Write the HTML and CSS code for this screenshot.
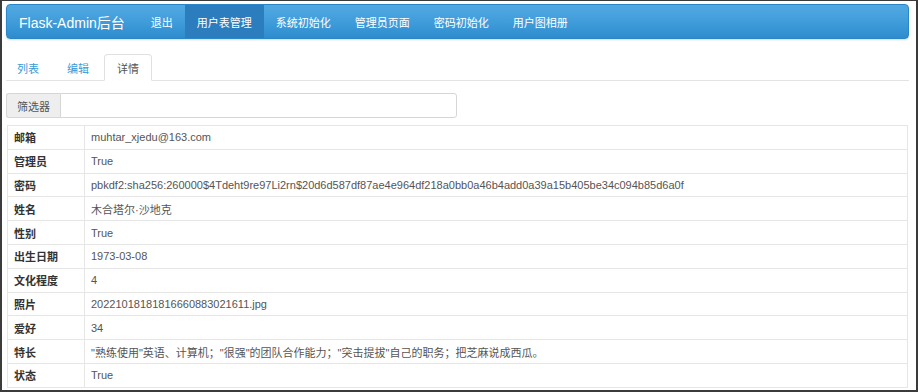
FILE: index.html
```html
<!DOCTYPE html>
<html lang="zh">
<head>
<meta charset="utf-8">
<title>Flask-Admin后台</title>
<link rel="stylesheet" href="styles.css">
</head>
<body>
<div class="frame">
  <nav class="navbar">
    <a class="brand" href="#">Flask-Admin后台</a>
    <ul class="nav">
      <li><a href="#">退出</a></li>
      <li class="active"><a href="#">用户表管理</a></li>
      <li><a href="#">系统初始化</a></li>
      <li><a href="#">管理员页面</a></li>
      <li><a href="#">密码初始化</a></li>
      <li><a href="#">用户图相册</a></li>
    </ul>
  </nav>

  <ul class="tabs">
    <li><a href="#">列表</a></li>
    <li><a href="#">编辑</a></li>
    <li class="active"><a href="#">详情</a></li>
  </ul>

  <div class="filter">
    <span class="addon">筛选器</span>
    <input class="filter-input" type="text">
  </div>

  <table class="details">
    <tbody>
      <tr><th>邮箱</th><td>muhtar_xjedu@163.com</td></tr>
      <tr><th>管理员</th><td>True</td></tr>
      <tr><th>密码</th><td>pbkdf2:sha256:260000$4Tdeht9re97Li2rn$20d6d587df87ae4e964df218a0bb0a46b4add0a39a15b405be34c094b85d6a0f</td></tr>
      <tr><th>姓名</th><td>木合塔尔·沙地克</td></tr>
      <tr><th>性别</th><td>True</td></tr>
      <tr><th>出生日期</th><td>1973-03-08</td></tr>
      <tr><th>文化程度</th><td>4</td></tr>
      <tr><th>照片</th><td>20221018181816660883021611.jpg</td></tr>
      <tr><th>爱好</th><td>34</td></tr>
      <tr><th>特长</th><td>"熟练使用"英语、计算机；"很强"的团队合作能力；"突击提拔"自己的职务；把芝麻说成西瓜。</td></tr>
      <tr><th>状态</th><td>True</td></tr>
    </tbody>
  </table>
</div>
</body>
</html>
```

FILE: styles.css
```css
html, body {
  margin: 0;
  padding: 0;
  background: #ffffff;
}

.frame {
  width: 918px;
  height: 392px;
  box-sizing: border-box;
  border-style: solid;
  border-color: #3b3b3b;
  border-width: 1px 2px 2px 2px;
  padding: 3px 7px 0 4px;
  overflow: hidden;
  font-family: "Liberation Sans", "Noto Sans CJK SC", sans-serif;
  font-size: 11px;
  color: #555555;
  background: #ffffff;
}

a {
  text-decoration: none;
}

/* navbar */
.navbar {
  display: flex;
  height: 35px;
  box-sizing: border-box;
  border: 1px solid #2a86c6;
  border-radius: 4px;
  background: linear-gradient(#51a9e1, #3d9ad9 60%, #2e8bcd);
  box-shadow: 0 1px 2px rgba(0, 0, 0, 0.15);
  overflow: hidden;
}

.brand {
  display: flex;
  align-items: center;
  padding: 0 14px 0 12px;
  font-size: 14px;
  color: #ffffff;
}

.nav {
  display: flex;
  margin: 0;
  padding: 0;
  list-style: none;
}

.nav li a {
  display: flex;
  align-items: center;
  height: 100%;
  padding: 0 12px;
  font-size: 11px;
  color: #ffffff;
}

.nav li.active a {
  background: #2b7dbd;
}

/* tabs */
.tabs {
  display: flex;
  margin: 15px 0 0 0;
  padding: 0;
  list-style: none;
  border-bottom: 1px solid #e3e3e3;
}

.tabs li {
  margin-right: 2px;
  margin-bottom: -1px;
}

.tabs li:first-child {
  margin-left: -2px;
}

.tabs li a {
  display: flex;
  align-items: center;
  height: 27px;
  box-sizing: border-box;
  padding: 0 12px;
  border: 1px solid transparent;
  border-radius: 4px 4px 0 0;
  color: #3a9ad8;
  font-size: 11px;
}

.tabs li.active a {
  color: #555555;
  background: #ffffff;
  border-color: #e0e0e0 #e0e0e0 transparent;
}

/* filter */
.filter {
  display: flex;
  width: 451px;
  height: 25px;
  margin-top: 12px;
  box-sizing: border-box;
}

.addon {
  display: flex;
  align-items: center;
  padding: 0 10px;
  background: #eeeeee;
  border: 1px solid #d6d6d6;
  border-right: none;
  border-radius: 3px 0 0 3px;
  color: #555555;
  font-size: 11px;
}

.filter-input {
  flex: 1;
  margin: 0;
  box-sizing: border-box;
  border: 1px solid #d6d6d6;
  border-radius: 0 3px 3px 0;
  background: #ffffff;
}

/* details table */
.details {
  width: 901px;
  margin: 7px 0 0 1px;
  border-collapse: collapse;
  table-layout: fixed;
}

.details th,
.details td {
  height: 23.8px;
  box-sizing: border-box;
  padding: 0 6px;
  border: 1px solid #e6e6e6;
  text-align: left;
  vertical-align: middle;
  font-size: 11px;
  white-space: nowrap;
}

.details th {
  width: 77px;
  color: #333333;
  font-weight: bold;
}

.details td {
  color: #555555;
}
```
